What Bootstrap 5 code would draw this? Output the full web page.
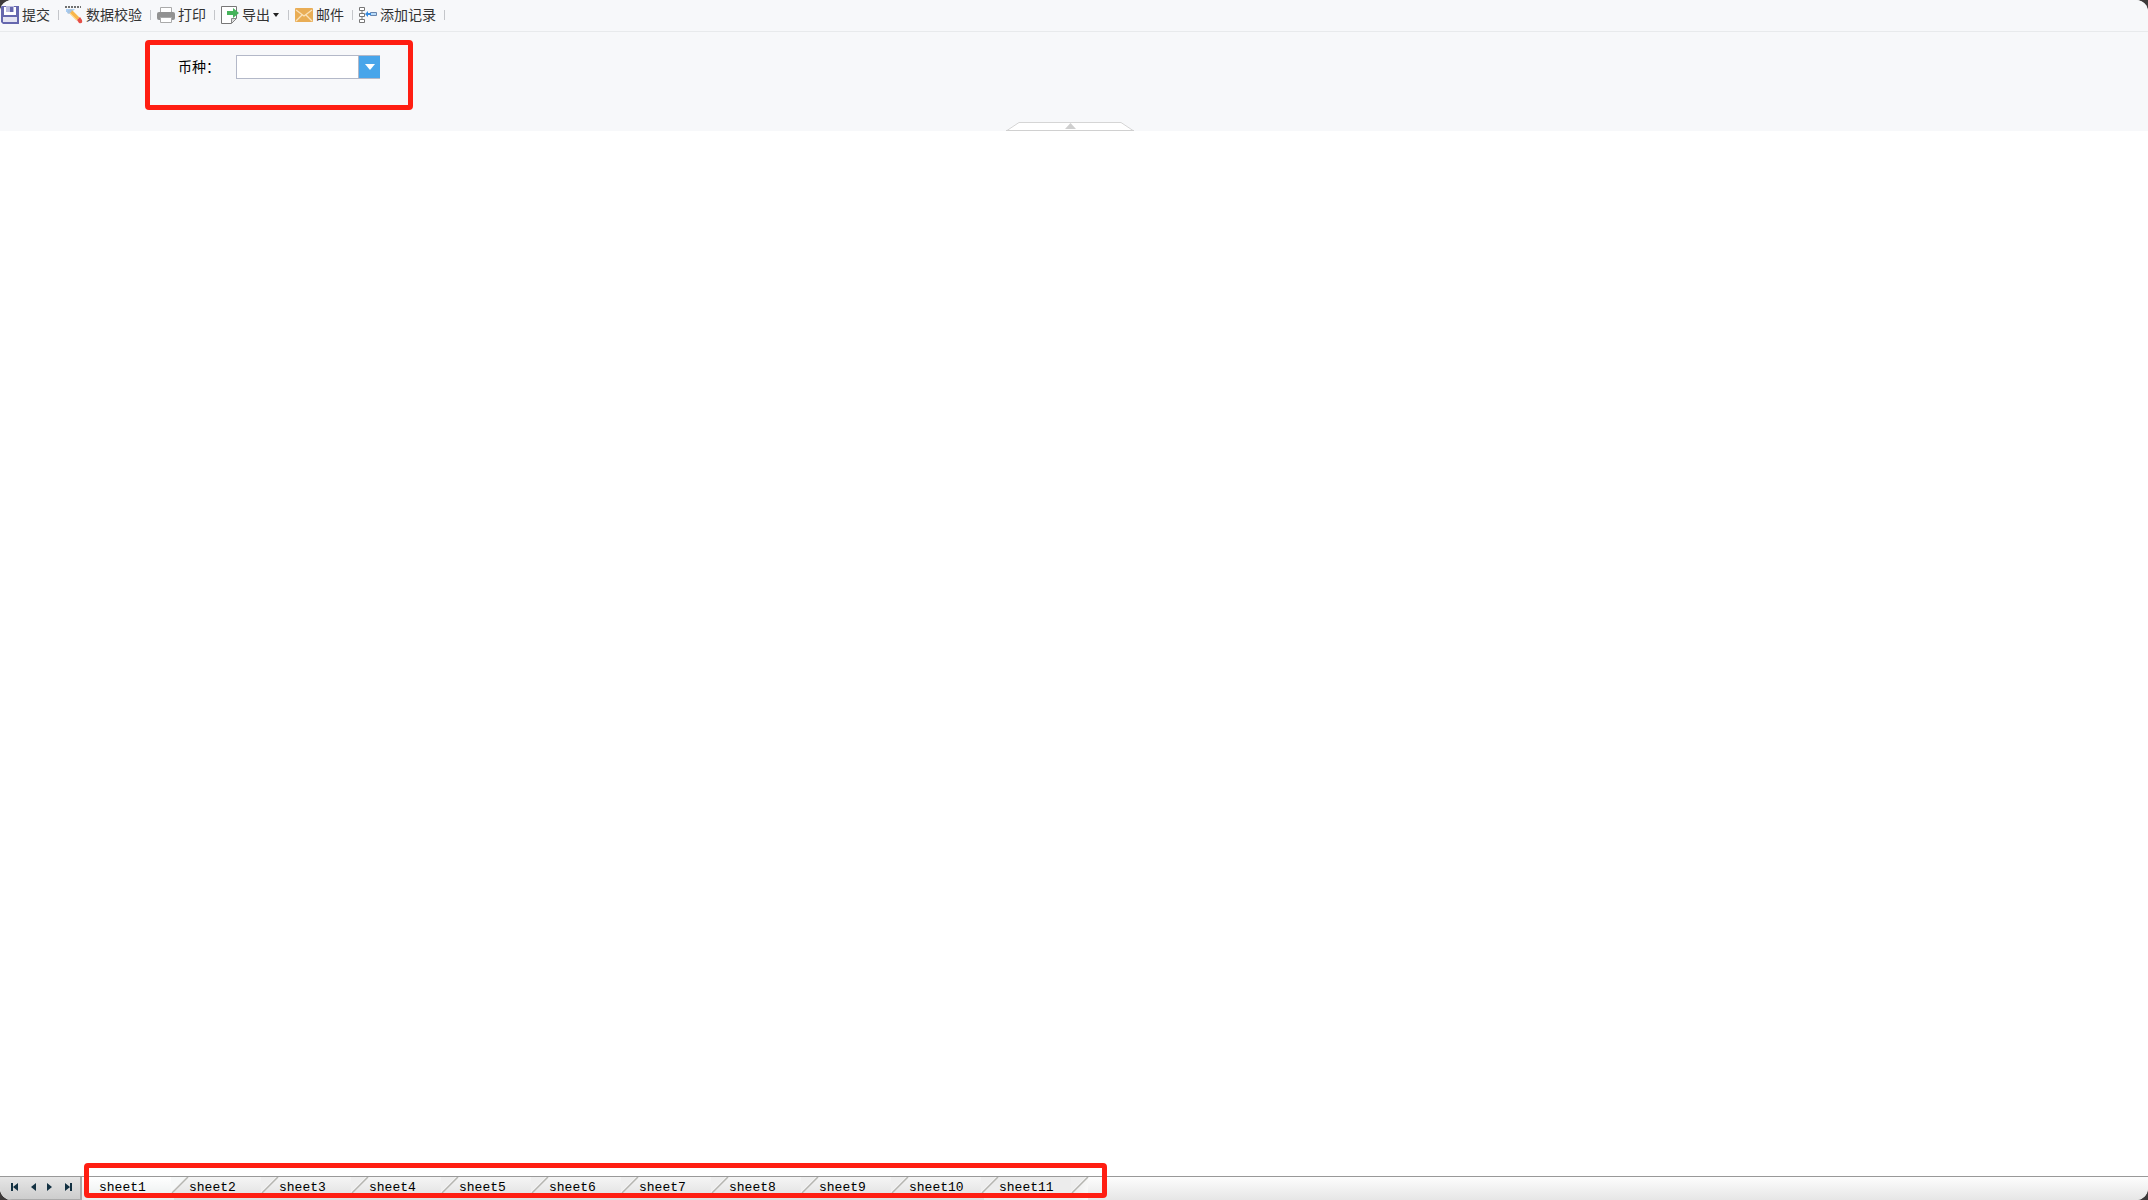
<!DOCTYPE html>
<html lang="zh-CN">
<head>
<meta charset="utf-8">
<meta name="viewport" content="width=device-width, initial-scale=1">
<title>报表填报</title>
<link href="https://cdn.jsdelivr.net/npm/bootstrap@5.3.0/dist/css/bootstrap.min.css" rel="stylesheet">
<style>
body{background:#3d3a3a;font:14px/20px "Noto Sans CJK SC",sans-serif;color:#333}
.app{border-radius:12px;background:#fff}
.toolbar{height:32px;padding:0 0 2px 1px;background:#f7f8fa;border-bottom:1px solid #e8eaec}
.tool{gap:3px;padding:0 8px 0 0;color:#333;font-size:14px;line-height:20px}
.tool svg{width:18px;height:18px}
.tool span{padding-bottom:2px}
.divider{width:1px;height:10px;background:#c4c6ca;margin-right:6px}
.tool .caret{width:6px;height:4px;margin-right:1px}
.params{height:99px;background:#f7f8fa;padding:8px 0 0 145px}
.marked{border:5px solid #ff1e12;border-radius:4px}
.param-box{width:268px;height:70px;padding:10px 0 0 28px}
.param-box label{width:58px;color:#000;padding-top:1px}
.combo{width:144px;height:24px;border:1px solid #b3b8c8}
.combo input{width:121px;background:#fff}
.combo button{width:22px;background:#48a5ea;border-left:1px solid #b3b8c8!important}
.fold{left:50%;bottom:0;width:128px;height:9px;margin-left:-68px}
.sheetbar{height:24px;border-top:1px solid #999;background:linear-gradient(#fdfdfd,#e6e6e6)}
.pager{width:82px;background:linear-gradient(#e6e6e6,#cdcdcd);border-right:2px solid #a9a9a9;border-bottom:1px solid #aaa;padding:0 0 3px 9px}
.pager button{height:18px;width:12px}
.pager svg{width:12px;height:10px}
.sheets{margin-left:2px}
.sheet{width:90px;height:23px;padding:0 0 2px 15px;color:#000;font:13px/20px "Liberation Mono",monospace;text-align:left;background:linear-gradient(#f5f5f5,#dedede)}
.sheet.current{background:linear-gradient(#fff,#e9eded)}
.sheet .slant{right:-15px;top:0;width:18px;height:17px;z-index:1}
.sheet:last-child{width:104px;background:linear-gradient(90deg,#ececec 88px,#f7f7f7 104px)}
.sheet:last-child .slant{right:-1px}
.sheet-mark{left:0;right:-19px;top:-14px;height:35px;z-index:2;pointer-events:none}
</style>
<script src="https://cdn.jsdelivr.net/npm/bootstrap@5.3.0/dist/js/bootstrap.bundle.min.js"></script>
</head>
<body>
<div class="app vh-100 d-flex flex-column overflow-hidden">
<header class="toolbar d-flex align-items-center flex-shrink-0" role="toolbar">
<button class="tool border-0 bg-transparent d-flex align-items-center" type="button"><svg viewBox="0 0 18 18"><path fill="#6567ae" d="M0 0h18v18H2l-2-2z"/><path fill="#fff" d="M3 1h12v8H3zM2 11h14v5H2z"/><path fill="#b9bade" d="M5 0h8v6H5z"/><path fill="#6567ae" d="M9 1h3v5H9z"/><path fill="#e4e4f2" d="M2 11h14v5H2z"/></svg><span>提交</span></button><i class="divider"></i>
<button class="tool border-0 bg-transparent d-flex align-items-center" type="button"><svg viewBox="0 0 18 18"><path d="M0 1h16" stroke="#444" stroke-width="1.500" stroke-dasharray="2 1"/><path fill="#a9cef4" d="M1 3h9L7 6H1z"/><path d="m5 5 8 8" stroke="#f9b64b" stroke-width="4"/><path d="m5 7 7 7" stroke="#ffd583"/><path fill="#a6c4e3" d="m3 4 3-1 1 2-3 3-2-1z"/><path fill="#e54f47" d="m12 14 3-3 2 3q1 4-3 3z"/></svg><span>数据校验</span></button><i class="divider"></i>
<button class="tool border-0 bg-transparent d-flex align-items-center" type="button"><svg viewBox="0 0 18 18"><path d="M3.500 7V1.500h11V7" fill="#fff" stroke="#aaa"/><rect y="6" width="18" height="8" rx="2" fill="#929292"/><path fill="#fff" stroke="#aaa" d="M3.500 11.500h11v5h-11z"/></svg><span>打印</span></button><i class="divider"></i>
<button class="tool border-0 bg-transparent d-flex align-items-center" type="button"><svg viewBox="0 0 18 18"><path fill="#fff" stroke="#777" d="M.5.5h15v12l-5 5H.5z"/><path fill="#ddd" stroke="#888" d="M10.500 17v-4.500H15"/><path fill="#45b35b" d="M6 5h6V2l6 5-6 5V9H6z"/></svg><span>导出</span><svg class="caret" viewBox="0 0 6 4"><path d="M0 0h6L3 4z" fill="#222"/></svg></button><i class="divider"></i>
<button class="tool border-0 bg-transparent d-flex align-items-center" type="button"><svg viewBox="0 0 18 18"><rect y="2" width="18" height="14" rx="1" fill="#e9ad55"/><path d="m1 4 8 6 8-6M1 15l6-6M17 15l-6-6" fill="none" stroke="#fae2ba" stroke-width="1.300"/></svg><span>邮件</span></button><i class="divider"></i>
<button class="tool border-0 bg-transparent d-flex align-items-center" type="button"><svg viewBox="0 0 18 18"><path d="M.5 1.500h5v3h-5zM.5 7.500h5v3h-5zM.5 13.500h5v3h-5zM3 4.500v3M3 10.500v3" fill="#fff" stroke="#777"/><path d="M11.500 6.500h6v3h-6z" fill="#b9dcfa" stroke="#6885ad"/><path fill="#378be0" d="m6 8 3-3v2h3v2H9v2z"/></svg><span>添加记录</span></button><i class="divider"></i>
</header>
<section class="params flex-shrink-0 position-relative">
<div class="param-box marked d-flex align-items-start">
<label for="currency">币种：</label>
<div class="combo d-flex"><input id="currency" class="border-0 p-0" type="text" role="combobox" aria-expanded="false"><button class="border-0 p-0 d-flex flex-shrink-0 align-items-center justify-content-center" type="button" aria-label="展开"><svg width="10" height="6" viewBox="0 0 10 6"><path fill="#fff" d="M0 0h10L5 6z"/></svg></button></div>
</div>
<button class="fold position-absolute border-0 bg-transparent p-0 d-flex" type="button" aria-label="收起"><svg width="128" height="9" viewBox="0 0 128 9"><path d="M1 8.500 13 .5h102l12 8" fill="#fff" stroke="#d5d5d5"/><path d="M0 8.500h128" stroke="#d0d0d0"/><path fill="#cfcfcf" d="m59 7 5.500-6L70 7z"/></svg></button>
</section>
<main class="flex-grow-1"></main>
<footer class="sheetbar d-flex flex-shrink-0">
<div class="pager d-flex align-items-center flex-shrink-0">
<button class="border-0 bg-transparent p-0 d-flex align-items-center" type="button" aria-label="第一页"><svg viewBox="0 0 12 10"><path fill="#133142" d="M2 1h2v8H2zM9 1v8L4 5z"/></svg></button>
<button class="border-0 bg-transparent p-0 d-flex align-items-center ms-2" type="button" aria-label="上一页"><svg viewBox="0 0 12 10"><path fill="#133142" d="M7 1v8L2 5z"/></svg></button>
<button class="border-0 bg-transparent p-0 d-flex align-items-center ms-1" type="button" aria-label="下一页"><svg viewBox="0 0 12 10"><path fill="#133142" d="M2 1v8l5-4z"/></svg></button>
<button class="border-0 bg-transparent p-0 d-flex align-items-center ms-2" type="button" aria-label="最后一页"><svg viewBox="0 0 12 10"><path fill="#133142" d="M0 1v8l5-4zM5 1h2v8H5z"/></svg></button>
</div>
<nav class="sheets d-flex position-relative" id="sheets"><div class="sheet-mark marked position-absolute"></div></nav>
</footer>
</div>
<script>
const sheets=document.getElementById('sheets');
for(let i=1;i<=11;i++){
  const tab=document.createElement('button');
  tab.type='button';
  tab.className='sheet border-0 position-relative'+(i===1?' current':'');
  tab.innerHTML='sheet'+i+'<svg class="slant position-absolute" viewBox="0 0 18 17"><path fill="'+(i===1?'#f6f8f8':'#eee')+'" d="M0 0h17L1 17H0z"/><path d="M1 16 17 0" stroke="#b5b5b0" stroke-width="1.5"/><path d="M0 15 15 0" stroke="#f4f4f4"/></svg>';
  sheets.append(tab);
}
</script>
</body>
</html>
